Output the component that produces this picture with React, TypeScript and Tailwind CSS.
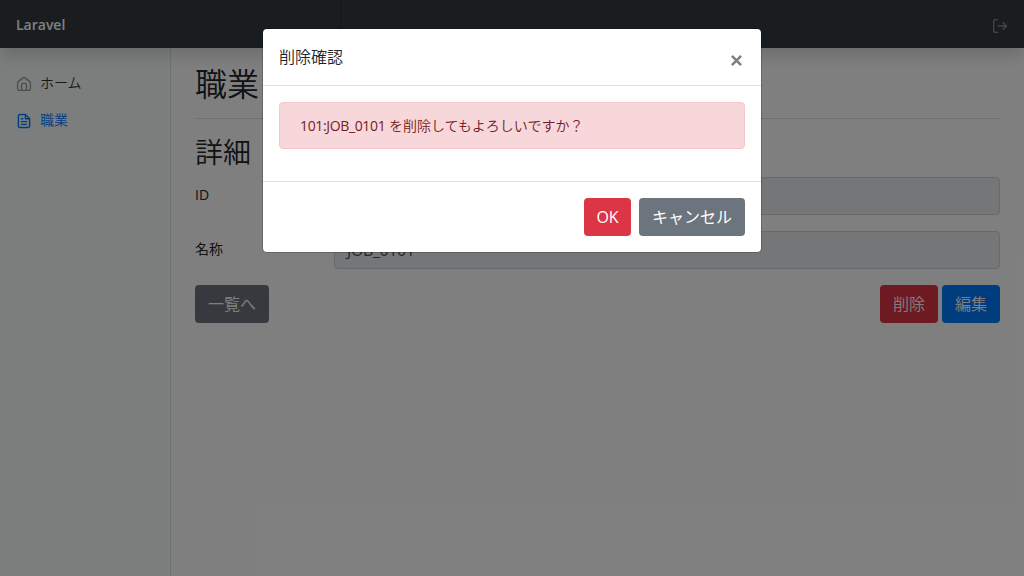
import React from "react";

const btn =
  "flex h-[38px] items-center justify-center rounded text-base text-white leading-6 whitespace-nowrap";

function HomeIcon() {
  return (
    <svg className="mt-0.5 size-4 shrink-0 text-[#9a9d9b]" viewBox="0 0 16 16" fill="none" stroke="currentColor" strokeWidth="1.35" strokeLinecap="round" strokeLinejoin="round">
      <path d="M1.6 6.8a1.6 1.6 0 0 1 .6-1.2L7 1.9a1.6 1.6 0 0 1 2 0l4.8 3.7a1.6 1.6 0 0 1 .6 1.2v6a1.5 1.5 0 0 1-1.5 1.5H3.1a1.5 1.5 0 0 1-1.5-1.5z" />
      <path d="M5.6 14.2V8.4a1 1 0 0 1 1-1h2.8a1 1 0 0 1 1 1v5.8" />
    </svg>
  );
}

function FileIcon() {
  return (
    <svg className="mt-0.5 size-4 shrink-0" viewBox="0 0 16 16" fill="none" stroke="currentColor" strokeWidth="1.4" strokeLinecap="round" strokeLinejoin="round">
      <path d="M9.4 1.5H3.7a1.3 1.3 0 0 0-1.3 1.3v10.4a1.3 1.3 0 0 0 1.3 1.3h8.6a1.3 1.3 0 0 0 1.3-1.3V5.6z" />
      <path d="M9.4 1.7v4h4M10.6 8.6H5.4M10.6 11.4H5.4M6.8 5.8H5.4" />
    </svg>
  );
}

function LogoutIcon() {
  return (
    <svg className="mt-1 mr-4 size-4" viewBox="0 0 16 16" fill="none" stroke="#85898c" strokeWidth="1.4" strokeLinecap="round" strokeLinejoin="round">
      <path d="M5.4 1.6H3.2a1.5 1.5 0 0 0-1.5 1.5v9.8a1.5 1.5 0 0 0 1.5 1.5h2.2" />
      <path d="M6.2 8h8.4M11.2 4.8 14.4 8l-3.2 3.2" />
    </svg>
  );
}

function Field({ label, value }: { label: string; value: string }) {
  return (
    <div className="mb-4 flex h-[38px]">
      <label className="w-[139px] pt-[7px] text-sm leading-[21px] font-normal">{label}</label>
      <div className="flex-1 rounded border border-[#ced4da] bg-[#e9ecef] px-3 py-1.5 text-base leading-6 font-normal tracking-[-0.4px] text-[#495057]">{value}</div>
    </div>
  );
}

export default function App() {
  return (
    <div className="relative h-[576px] w-[1024px] overflow-hidden bg-white font-['Open_Sans','Noto_Sans_CJK_JP',sans-serif] text-sm font-[360] text-[#212529]">
      <header className="relative z-10 flex h-12 items-center justify-between bg-[#343a40] shadow-[0_8px_16px_rgba(0,0,0,0.15)]">
        <div className="flex h-12 w-[341px] items-center pt-px pl-4 text-sm font-semibold text-white shadow-[inset_-1px_0_0_rgba(0,0,0,0.25)]">
          Laravel
        </div>
        <LogoutIcon />
      </header>
      <div className="flex h-[528px]">
        <nav className="w-[171px] border-r border-[#dfe3e1] bg-[#f8fdfa] pt-4">
          <a className="flex h-[37px] items-center gap-2 px-4 text-[#333333]">
            <HomeIcon />
            <span>ホーム</span>
          </a>
          <a className="flex h-[37px] items-center gap-2 px-4 text-[#007bff]">
            <FileIcon />
            <span>職業</span>
          </a>
        </nav>
        <main className="flex-1 px-6 pt-4">
          <h1 className="h-[55px] border-b border-[#e0e0e0] text-[32px] leading-[39px] font-[360]">職業</h1>
          <h2 className="mt-4 mb-2 h-[34px] text-[28px] leading-[34px] font-[360]">詳細</h2>
          <Field label="ID" value="101" />
          <Field label="名称" value="JOB_0101" />
          <div className="flex justify-between">
            <button className={`${btn} w-[74px] bg-[#6c757d]`}>一覧へ</button>
            <div className="flex gap-1">
              <button className={`${btn} w-[58px] bg-[#dc3545]`}>削除</button>
              <button className={`${btn} w-[58px] bg-[#007bff]`}>編集</button>
            </div>
          </div>
        </main>
      </div>
      <div className="absolute inset-0 z-20 flex items-start justify-center bg-black/50 pt-[29px]">
        <section className="h-[223px] w-[498px] rounded bg-white shadow-[0_0_0_1px_rgba(0,0,0,0.2)]">
          <div className="flex h-[57px] justify-between border-b border-[#dee2e6] p-4">
            <h5 className="text-base leading-6 font-[360]">削除確認</h5>
            <button className="flex h-[30px] w-[17px] items-center justify-center" aria-label="Close">
              <svg className="size-[11px]" viewBox="0 0 12 12" fill="none" stroke="#7f7f7f" strokeWidth="2.7">
                <path d="m1 1 10 10M11 1 1 11" />
              </svg>
            </button>
          </div>
          <div className="h-[95px] p-4">
            <div className="h-[47px] rounded border border-[#f5c6cb] bg-[#f8d7da] px-5 py-3 text-sm leading-[21px] text-[#721c24]">
              <span className="font-normal tracking-[-0.35px]">101:JOB_0101</span> を削除してもよろしいですか？
            </div>
          </div>
          <div className="flex h-[71px] justify-end gap-2 border-t border-[#dee2e6] p-4">
            <button className={`${btn} w-[47px] bg-[#dc3545] font-normal`}>OK</button>
            <button className={`${btn} w-[106px] bg-[#6c757d] font-normal`}>キャンセル</button>
          </div>
        </section>
      </div>
    </div>
  );
}
